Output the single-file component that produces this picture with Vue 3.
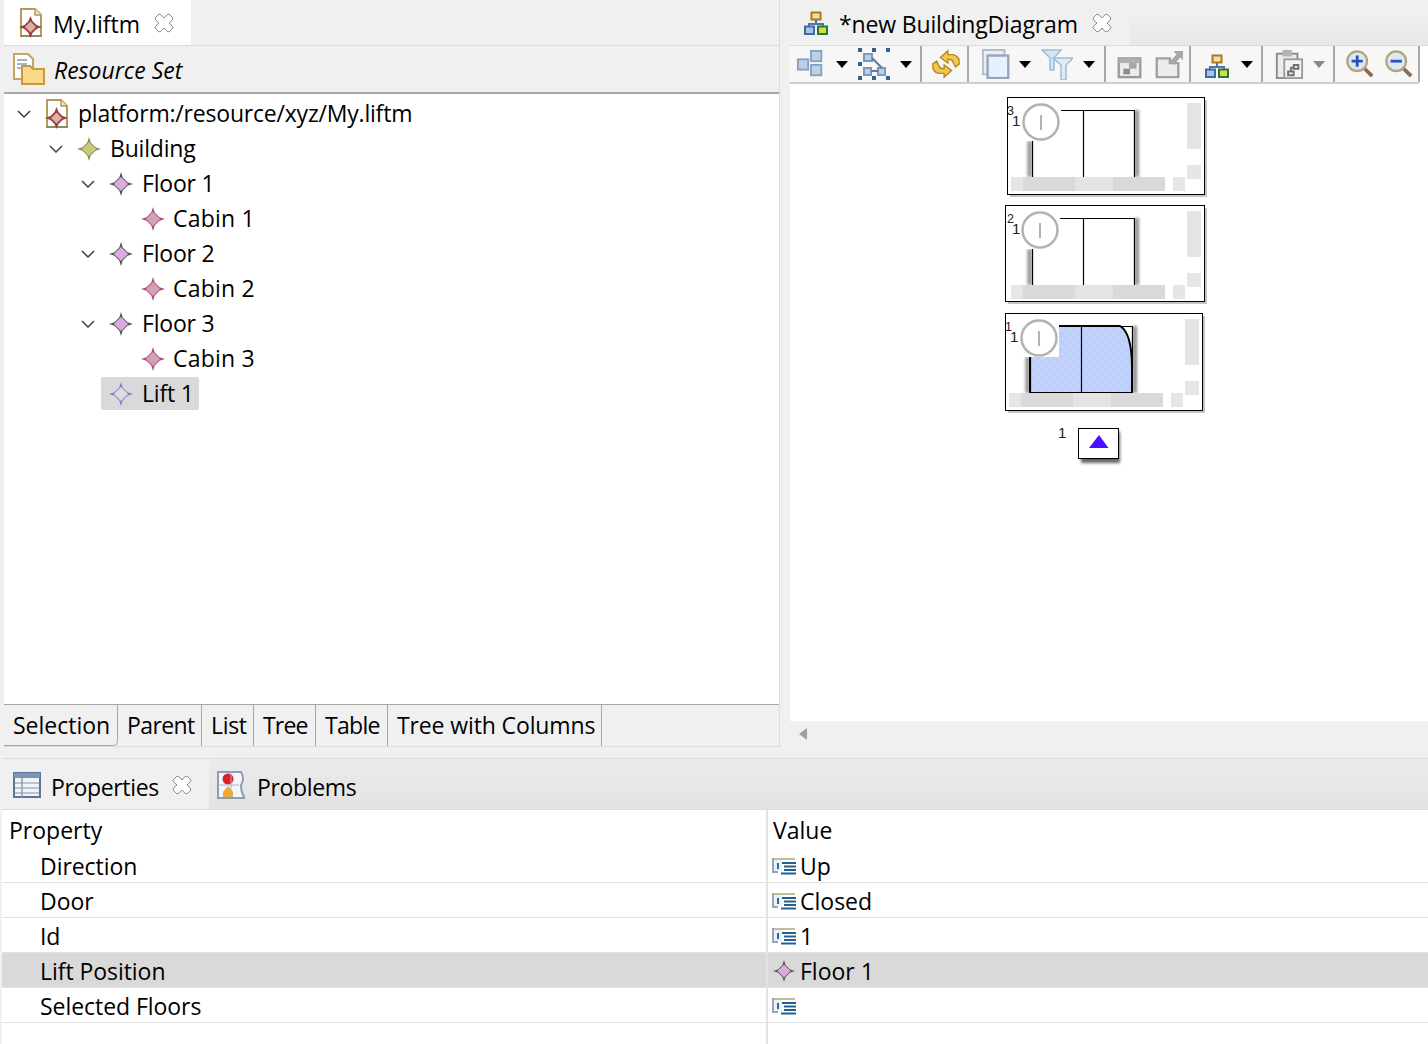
<template>
	<div class="page">
		<!-- shared icon shapes -->
		<svg class="defs" width="0" height="0" aria-hidden="true">
			<symbol id="star" viewBox="-11 -11 22 22">
				<path class="star-outer" d="M0-11 1.600-6 6-1.600 11 0 6 1.600 1.600 6 0 11-1.600 6-6 1.600-11 0-6-1.600-1.600-6Z" />
				<path class="star-inner" d="M0-6.500 6.500 0 0 6.500-6.500 0Z" />
			</symbol>
			<symbol id="model" viewBox="0 0 24 30">
				<path d="M2 1H16L22 7V28H2Z" fill="#fff" stroke="#b59a5a" stroke-width="2" />
				<path d="M16 1V7H22" fill="#f3e3b5" stroke="#b59a5a" stroke-width="1.500" />
				<path d="M1 28H23" stroke="#8b8b62" stroke-width="2" />
				<path d="M11.500 8 13.500 13 17.500 17 23 19 17.500 21 13.500 25 11.500 30 9.500 25 5.500 21 0 19 5.500 17 9.500 13Z" fill="#a23a3a" />
				<path d="M11.500 13 17.500 19 11.500 25 5.500 19Z" fill="#d9b2a8" stroke="#a23a3a" stroke-width="1" />
			</symbol>
			<symbol id="enum" viewBox="0 0 26 18">
				<path d="M1 1H21V3H3V14H7V16H1Z" fill="#a0a0b4" />
				<path d="M3 1H24V3H3Z" fill="#c4bc94" />
				<path d="M3 3H11V14H3Z" fill="#e8f2fa" />
				<path d="M6 6H8V12H6Z" fill="#1f6ea8" />
				<path d="M11 5H25V7H11ZM13 8.500H25V10.500H13ZM13 12H25V14H13ZM10 15.500H25V17.500H10Z" fill="#24608f" />
			</symbol>
			<symbol id="close" viewBox="0 0 22 22">
				<path d="M2 6 6 2Q8 2 11 6 14 2 16 2L20 6Q20 8 16 11 20 14 20 16L16 20Q14 20 11 16 8 20 6 20L2 16Q2 14 6 11 2 8 2 6Z" fill="#fff" stroke="#8c8c8c" stroke-width="1" />
			</symbol>
			<symbol id="hier" viewBox="0 0 24 24">
				<rect x="7.500" y="1.500" width="9" height="7" fill="#f5dfa0" stroke="#a9781c" stroke-width="2" />
				<path d="M12 9V13M5 17V13H19V17" fill="none" stroke="#4a74aa" stroke-width="2" />
				<rect x="1" y="15.500" width="9" height="7.500" fill="#a9c3e4" stroke="#3f6ba5" stroke-width="2" />
				<rect x="14" y="15.500" width="9" height="7.500" fill="#e3d840" stroke="#1f7a3d" stroke-width="2" />
			</symbol>
		</svg>

		<div class="top">
			<section class="editor">
				<header class="tabbar">
					<div class="tab tab-on editor-tab">
						<svg class="ic-model"><use href="#model" /></svg>
						<span class="tab-text">My.liftm</span>
						<svg class="ic-close"><use href="#close" /></svg>
					</div>
				</header>
				<div class="resource-head">
					<svg class="ic-set" viewBox="0 0 32 32">
						<path d="M1 1H15L20 6V26H1Z" fill="#fff" stroke="#c6a65e" stroke-width="2" />
						<path d="M4 7H14M4 11H14M4 15H10" stroke="#9fb4d0" stroke-width="2" />
						<path d="M9 13H17L20 16H31V31H9Z" fill="#fbd98b" stroke="#c99a3c" stroke-width="2" />
					</svg>
					<em>Resource Set</em>
				</div>
				<div class="tree">
					<div v-for="node in tree" :key="node.label" class="tree-row" :style="{ paddingLeft: node.indent + 'px' }">
						<svg v-if="node.open" class="chevron" viewBox="0 0 14 8"><path d="M1 1 7 7 13 1" fill="none" stroke="#404040" stroke-width="1.500" /></svg>
						<span v-else class="chevron"></span>
						<div class="tree-item" :class="{ 'tree-selected': node.selected }">
							<svg v-if="node.kind === 'model'" class="ic-model"><use href="#model" /></svg>
							<svg v-else class="ic-star" :class="node.kind"><use href="#star" /></svg>
							<span class="tree-label" :class="node.kind + '-label'">{{ node.label }}</span>
						</div>
					</div>
				</div>
				<div class="pages">
					<span
						v-for="(p, i) in pages"
						:key="p.label"
						class="page-tab"
						:class="{ 'page-on': i === 0 }"
						:style="{ width: p.width + 'px', letterSpacing: p.spacing + 'px' }"
					>{{ p.label }}</span>
				</div>
			</section>

			<section class="diagram">
				<header class="tabbar">
					<div class="tab diagram-tab">
						<svg class="ic-hier"><use href="#hier" /></svg>
						<span class="tab-text diagram-text">*new BuildingDiagram</span>
						<svg class="ic-close"><use href="#close" /></svg>
					</div>
				</header>
				<div class="toolbar">
					<div class="tool-group g1">
						<svg class="tool" viewBox="0 0 32 32">
							<g fill="#bcd0e8" stroke="#8aa0c0" stroke-width="2"><rect x="2" y="11" width="11" height="11" /><rect x="16" y="2" width="11" height="11" /><rect x="16" y="17" width="11" height="11" /></g>
						</svg>
						<i class="caret"></i>
						<svg class="tool tool-wide" viewBox="0 0 32 32">
							<g fill="#bcd0e8" stroke="#7b98bf" stroke-width="2"><rect x="6" y="6" width="8" height="7" /><rect x="6" y="20" width="7" height="7" /><rect x="20" y="20" width="7" height="7" /></g>
							<path d="M14 10 24 20M13 23H20" stroke="#5b7ba6" stroke-width="2" />
							<g fill="#35608f"><rect x="0" y="0" width="4" height="4" /><rect x="14" y="0" width="4" height="4" /><rect x="28" y="0" width="4" height="4" /><rect x="0" y="28" width="4" height="4" /><rect x="14" y="28" width="4" height="4" /><rect x="28" y="28" width="4" height="4" /><rect x="0" y="14" width="4" height="4" /></g>
						</svg>
						<i class="caret"></i>
					</div>
					<div class="tool-group g2">
						<svg class="tool" viewBox="0 0 32 32">
							<g fill="#f4c84a" stroke="#b58a20" stroke-width="1.500">
								<path d="M10 9 18 2V6H24Q31 8 30 16L26 19 23 13Q22 11 18 11V15Z" />
								<path d="M22 23 14 30V26H8Q1 24 2 16L6 13 9 19Q10 21 14 21V17Z" />
							</g>
						</svg>
					</div>
					<div class="tool-group g3">
						<svg class="tool" viewBox="0 0 32 32">
							<path d="M1 1H24V7H7V27H1Z" fill="#e8eef5" stroke="#b4bcc8" stroke-width="2" />
							<rect x="6" y="7" width="22" height="24" fill="#e4f2fd" stroke="#98a4b8" stroke-width="2.500" />
						</svg>
						<i class="caret caret-tight"></i>
						<svg class="tool tool-wide" viewBox="0 0 32 32">
							<path d="M1 2H20L13 10V22H9V10Z" fill="#cfe6f5" stroke="#a4bccf" stroke-width="1.500" />
							<path d="M12 10H32L25 17V32H20V17Z" fill="#dcedf8" stroke="#a4bccf" stroke-width="1.500" />
						</svg>
						<i class="caret"></i>
					</div>
					<div class="tool-group g4">
						<svg class="tool" viewBox="0 0 32 32">
							<rect x="4" y="10" width="23" height="20" fill="#ececec" stroke="#9a9a9a" stroke-width="2.500" />
							<rect x="4" y="10" width="23" height="5" fill="#b0b0b0" />
							<rect x="9" y="21" width="7" height="6" fill="#8c8c8c" />
							<rect x="15" y="15" width="8" height="6" fill="#a6a6a6" />
						</svg>
						<svg class="tool" viewBox="0 0 32 32">
							<path d="M4 10H18V15H27V30H4Z" fill="#ececec" stroke="#a0a0a0" stroke-width="2.500" />
							<path d="M18 13 25 6 22 2H32V12L29 9 22 17Z" fill="#a8a8a8" />
						</svg>
					</div>
					<div class="tool-group g5">
						<svg class="tool-hier"><use href="#hier" /></svg>
						<i class="caret caret-hier"></i>
					</div>
					<div class="tool-group g6">
						<svg class="tool" viewBox="0 0 32 32">
							<rect x="3" y="5" width="22" height="26" fill="#ececec" stroke="#8a8a8a" stroke-width="2" />
							<rect x="9" y="1" width="10" height="7" fill="#b4b4b4" />
							<rect x="11" y="11" width="19" height="20" fill="#f4f4f4" stroke="#9a9a9a" stroke-width="2" />
							<path d="M15 24H21V28H15ZM21 17H26V21H21ZM18 24V20H21" fill="none" stroke="#707070" stroke-width="2" />
						</svg>
						<i class="caret caret-off"></i>
					</div>
					<div class="tool-group g7">
						<svg class="tool" viewBox="0 0 32 32">
							<path d="M20 20 29 29" stroke="#8f6a50" stroke-width="4" />
							<circle cx="13" cy="13" r="10.500" fill="#dce8f5" stroke="#b2a67a" stroke-width="2.500" />
							<path d="M7 13H19M13 7V19" stroke="#2b52b8" stroke-width="3" />
						</svg>
						<svg class="tool" viewBox="0 0 32 32">
							<path d="M20 20 29 29" stroke="#8f6a50" stroke-width="4" />
							<circle cx="13" cy="13" r="10.500" fill="#dce8f5" stroke="#b2a67a" stroke-width="2.500" />
							<path d="M7 13H19" stroke="#2b52b8" stroke-width="3" />
						</svg>
					</div>
				</div>
				<div class="canvas">
					<svg class="canvas-svg" viewBox="790 84 638 637">
						<defs>
							<pattern id="dots" x="0" y="0" width="8" height="8" patternUnits="userSpaceOnUse">
								<rect width="8" height="8" fill="#bccfff" />
								<rect x="1" y="1" width="1" height="1" fill="#f0f4ff" />
								<rect x="5" y="5" width="1" height="1" fill="#f0f4ff" />
							</pattern>
							<filter id="soft" x="-60%" y="-30%" width="220%" height="160%"><feGaussianBlur stdDeviation="1.600" /></filter>
						</defs>
						<g v-for="f in floors" :key="f.n" :transform="`translate(${f.x} ${f.y})`">
							<rect x="3" y="3" :width="f.w" :height="f.h" fill="#c4c4c4" />
							<rect x="0.500" y="0.500" :width="f.w" :height="f.h" fill="#fff" stroke="#000" />
							<!-- cabin -->
							<g :transform="`translate(${f.ox} 0)`">
								<path d="M22.500 44V80M130 13V80" stroke="#8c8c8c" stroke-width="4" fill="none" filter="url(#soft)" />
								<path v-if="f.lift" d="M25 80V40Q25 13 40 13H115Q127 20 127 55V80Z" fill="url(#dots)" stroke="#000" stroke-width="2" />
								<path d="M40.500 13.500H127.500V80M76.500 13.500V80M25.500 43V80" fill="none" stroke="#000" stroke-width="1.200" />
							</g>
							<rect v-if="f.lift" x="1" y="1" width="53" height="43" fill="#fff" />
							<rect v-else x="1" y="5" :width="f.cx + 19" height="39" fill="#fff" />
							<circle :cx="f.cx" cy="25" r="17.500" fill="#fff" stroke="#b2b2b2" stroke-width="2.500" />
							<path :d="`M${f.cx} 18V33`" stroke="#b4b4b4" stroke-width="2" />
							<g :transform="`translate(${f.ox} 0)`">
								<rect x="4" y="80" width="12" height="14" fill="#e6e6e6" />
								<rect x="16" y="80" width="52" height="14" fill="#d9d9d9" />
								<rect x="68" y="80" width="38" height="14" fill="#e4e4e4" />
								<rect x="106" y="80" width="52" height="14" fill="#d9d9d9" />
								<rect x="166" y="80" width="12" height="14" fill="#e6e6e6" />
								<rect x="180" y="6" width="14" height="46" fill="#e4e4e4" />
								<rect x="180" y="68" width="14" height="14" fill="#e6e6e6" />
							</g>
							<text :x="f.tx" y="18" class="tiny">{{ f.n }}</text>
							<text :x="f.ox + 5" y="29" class="tiny-1">1</text>
						</g>
						<text x="1058" y="438" class="tiny-1">1</text>
						<rect x="1081" y="432" width="39" height="31" fill="#666" filter="url(#soft)" />
						<rect x="1078.500" y="428.500" width="40" height="30" fill="#fff" stroke="#000" />
						<path d="M1099 435 1108.500 448H1089Z" fill="#4a10ff" />
					</svg>
				</div>
				<div class="hscroll"><i class="arrow-left"></i></div>
			</section>
		</div>

		<section class="bottom">
			<header class="tabbar bottom-bar">
				<div class="tab tab-grey props-tab">
					<svg class="ic-table" viewBox="0 0 28 26">
						<rect x="1" y="1" width="26" height="24" fill="#f2f4f8" stroke="#5e7494" stroke-width="2" />
						<rect x="1" y="1" width="26" height="5" fill="#7d93b2" />
						<path d="M2 11H26M2 16H26M2 21H26" stroke="#b9c2d2" stroke-width="2" />
						<path d="M9 6V25" stroke="#8b9cb8" stroke-width="1.500" />
					</svg>
					<span class="bottom-text">Properties</span>
					<svg class="ic-close"><use href="#close" /></svg>
				</div>
				<div class="tab problems-tab">
					<svg class="ic-table" viewBox="0 0 28 28">
						<path d="M1 1H24Q28 8 24 14 24 22 28 27H1Z" fill="#f4f6fa" stroke="#8e9cb4" stroke-width="2" />
						<circle cx="11" cy="8" r="5.500" fill="#d9202a" />
						<path d="M11 15 16 21V26H6V21Z" fill="#f2a92c" />
						<path d="M1 14H22M14 1V27" stroke="#a9b4c6" stroke-width="1" />
					</svg>
					<span class="bottom-text">Problems</span>
				</div>
			</header>
			<div class="prop-table">
				<div class="prop-head"><span class="col-a head-a">Property</span><span class="col-b head-b">Value</span></div>
				<div v-for="row in props" :key="row.name" class="prop-row" :class="{ 'prop-selected': row.selected }">
					<span class="col-a name">{{ row.name }}</span>
					<span class="col-b value">
						<svg v-if="row.star" class="ic-star-small floor"><use href="#star" /></svg>
						<svg v-else class="ic-enum"><use href="#enum" /></svg>
						<span :class="{ 'value-star': row.star }">{{ row.value }}</span>
					</span>
				</div>
				<div class="prop-rest"><span class="col-a"></span><span class="col-b"></span></div>
			</div>
		</section>
	</div>
</template>

<script setup>
const tree = [
	{ label: "platform:/resource/xyz/My.liftm", indent: 13, open: true, kind: "model" },
	{ label: "Building", indent: 45, open: true, kind: "building" },
	{ label: "Floor 1", indent: 77, open: true, kind: "floor" },
	{ label: "Cabin 1", indent: 109, kind: "cabin" },
	{ label: "Floor 2", indent: 77, open: true, kind: "floor" },
	{ label: "Cabin 2", indent: 109, kind: "cabin" },
	{ label: "Floor 3", indent: 77, open: true, kind: "floor" },
	{ label: "Cabin 3", indent: 109, kind: "cabin" },
	{ label: "Lift 1", indent: 77, kind: "lift", selected: true },
];

const pages = [
	{ label: "Selection", width: 114, spacing: 0 },
	{ label: "Parent", width: 84, spacing: -0.6 },
	{ label: "List", width: 52, spacing: -0.3 },
	{ label: "Tree", width: 62, spacing: -0.8 },
	{ label: "Table", width: 72, spacing: -0.7 },
	{ label: "Tree with Columns", width: 214, spacing: -0.12 },
];

const floors = [
	{ n: 3, x: 1007, y: 97, w: 197, h: 97, ox: 0, cx: 34, tx: 0 },
	{ n: 2, x: 1005, y: 205, w: 199, h: 96, ox: 2, cx: 35, tx: 2 },
	{ n: 1, x: 1005, y: 313, w: 197, h: 97, ox: 0, cx: 34, tx: 0, lift: true },
];

const props = [
	{ name: "Direction", value: "Up" },
	{ name: "Door", value: "Closed" },
	{ name: "Id", value: "1" },
	{ name: "Lift Position", value: "Floor 1", star: true, selected: true },
	{ name: "Selected Floors", value: "" },
];
</script>

<style>
html,
body {
	margin: 0;
	overflow: hidden;
	background: #f0f0f0;
}
</style>

<style scoped>
.page {
	width: 1428px;
	height: 1044px;
	display: flex;
	flex-direction: column;
	overflow: hidden;
	background: #f0f0f0;
	color: #000;
	font-family: "Open Sans", "Noto Sans", sans-serif;
	font-size: 23px;
}

.defs {
	position: absolute;
}

.top {
	height: 758px;
	display: flex;
	flex: none;
}

.editor {
	width: 776px;
	height: 747px;
	margin-left: 4px;
	display: flex;
	flex-direction: column;
	background: #fff;
	border-right: 1px solid #dcdcdc;
}

.diagram {
	margin-left: 10px;
	flex: 1;
	height: 747px;
	display: flex;
	flex-direction: column;
	background: #fff;
}

.tabbar {
	height: 46px;
	flex: none;
	display: flex;
	background: linear-gradient(#f2f2f2, #e8e8e8);
	border-bottom: 1px solid #dcdcdc;
	box-sizing: border-box;
}

.editor .tabbar {
	background: #f0f0f0;
}

.tab {
	height: 45px;
	display: flex;
	align-items: center;
	box-sizing: border-box;
}

.tab-on {
	background: #fff;
}

.tab-text {
	padding-top: 2px;
}

.editor-tab {
	width: 187px;
	padding-left: 15px;
	gap: 10px;
}

.editor-tab .ic-close {
	margin-left: 3px;
}

.diagram-tab {
	width: 340px;
	padding-left: 14px;
	gap: 11px;
	background: #f0f0f0;
}

.diagram-text {
	letter-spacing: -0.15px;
}

.ic-model {
	width: 24px;
	height: 30px;
	flex: none;
}

.ic-close {
	width: 22px;
	height: 22px;
	flex: none;
	margin-left: 2px;
}

.ic-hier {
	width: 24px;
	height: 24px;
	flex: none;
}

.resource-head {
	height: 48px;
	flex: none;
	box-sizing: border-box;
	display: flex;
	align-items: center;
	gap: 9px;
	padding-left: 9px;
	background: #f0f0f0;
	border-bottom: 2px solid #a6a6a6;
}

.resource-head em {
	padding-top: 2px;
}

.ic-set {
	width: 32px;
	height: 32px;
}

.tree {
	flex: 1;
	padding-top: 2px;
}

.tree-row {
	height: 35px;
	display: flex;
	align-items: center;
}

.chevron {
	width: 14px;
	height: 8px;
	flex: none;
}

.tree-item {
	height: 33px;
	margin-left: 6px;
	padding: 0 5px 0 8px;
	display: flex;
	align-items: center;
	border-radius: 2px;
}

.tree-selected {
	background: #d9d9d9;
}

.ic-star {
	width: 24px;
	height: 24px;
	flex: none;
}

.tree-label {
	margin-left: 9px;
	padding-bottom: 2px;
	letter-spacing: -0.2px;
	white-space: nowrap;
}

.cabin-label {
	margin-left: 8px;
	letter-spacing: 0.2px;
}

.star-outer {
	fill: var(--star-dark);
}

.star-inner {
	fill: var(--star-light);
}

.building {
	--star-dark: #8b8b52;
	--star-light: #c9c97a;
}

.floor {
	--star-dark: #555;
	--star-light: #dcaadc;
}

.cabin {
	--star-dark: #b84582;
	--star-light: #cfa3b3;
}

.lift {
	--star-dark: #7f7fd2;
	--star-light: #dcdcdc;
}

.pages {
	height: 43px;
	flex: none;
	display: flex;
	background: #f0f0f0;
	border-top: 1px solid #a6a6a6;
	box-sizing: border-box;
	border-bottom: 1px solid #dcdcdc;
}

.page-tab {
	height: 41px;
	padding-left: 9px;
	line-height: 41px;
	box-sizing: border-box;
	border-right: 1px solid #a6a6a6;
	background: #f0f0f0;
	white-space: nowrap;
	flex: none;
}

.page-on {
	border-bottom: 1px solid #a6a6a6;
	border-bottom-right-radius: 5px;
}

.toolbar {
	height: 38px;
	flex: none;
	display: flex;
	align-items: center;
	box-sizing: border-box;
	width: 629px;
	background: #f7f7f7;
	border-bottom: 2px solid #cfcfcf;
	border-right: 1px solid #cfcfcf;
}

.tool-group {
	height: 36px;
	flex: none;
	display: flex;
	align-items: center;
	box-sizing: border-box;
	border-right: 2px solid #a8a8a8;
}

.g1 { width: 132px; padding-left: 6px; }
.g2 { width: 47px; padding-left: 9px; }
.g3 { width: 137px; padding-left: 13px; }
.g4 { width: 85px; padding-left: 9px; }
.g5 { width: 72px; padding-left: 14px; }
.g6 { width: 72px; padding-left: 11px; }
.g7 { width: 85px; padding-left: 10px; gap: 9px; }

.tool {
	width: 30px;
	height: 30px;
	flex: none;
}

.tool-wide {
	width: 32px;
	height: 32px;
}

.tool-hier {
	width: 24px;
	height: 24px;
	flex: none;
	margin-top: 4px;
}

.caret {
	width: 0;
	height: 0;
	margin: 0 10px;
	border-left: 6px solid transparent;
	border-right: 6px solid transparent;
	border-top: 7px solid #000;
	flex: none;
}

.caret-tight {
	margin-left: 7px;
}

.caret-hier {
	margin-left: 12px;
}

.caret-off {
	margin-left: 9px;
	border-top-color: #888;
}

.g4 .tool + .tool {
	margin-left: 8px;
}

.canvas {
	flex: 1;
	min-height: 0;
	background: #fff;
}

.canvas-svg {
	display: block;
	width: 638px;
	height: 637px;
}

.tiny,
.tiny-1 {
	font-family: "Liberation Sans", sans-serif;
	fill: #222;
}

.tiny {
	font-size: 12.500px;
}

.tiny-1 {
	font-size: 15px;
}

.hscroll {
	height: 26px;
	flex: none;
	display: flex;
	align-items: center;
	background: #f0f0f0;
	padding-left: 9px;
}

.arrow-left {
	width: 0;
	height: 0;
	border-top: 6px solid transparent;
	border-bottom: 6px solid transparent;
	border-right: 8px solid #a0a0a0;
}

.bottom {
	flex: 1;
	min-height: 0;
	margin-left: 2px;
	display: flex;
	flex-direction: column;
	background: #fff;
}

.bottom-bar {
	height: 52px;
	background: linear-gradient(#ebebeb, #e3e3e3);
	border-top: 1px solid #dcdcdc;
}

.tab-grey {
	background: #f0f0f0;
}

.bottom-bar .tab {
	height: 50px;
	padding-top: 2px;
}

.bottom-text {
	padding-top: 4px;
	letter-spacing: -0.35px;
}

.props-tab {
	width: 207px;
	padding-left: 11px;
	gap: 10px;
}

.problems-tab {
	padding-left: 8px;
	gap: 12px;
}

.ic-table {
	width: 28px;
	height: 28px;
	flex: none;
}

.prop-table {
	flex: 1;
	display: flex;
	flex-direction: column;
}

.prop-head,
.prop-row,
.prop-rest {
	display: flex;
	flex: none;
}

.prop-head {
	height: 38px;
	line-height: 40px;
}

.prop-row {
	height: 35px;
	line-height: 37px;
	box-sizing: border-box;
	border-bottom: 1px solid #e2e2e2;
}

.prop-rest {
	flex: 1;
}

.prop-selected {
	background: #d9d9d9;
}

.col-a {
	width: 764px;
	flex: none;
	box-sizing: border-box;
}

.col-b {
	flex: 1;
	box-sizing: border-box;
	border-left: 2px solid #e2e2e2;
}

.head-a {
	padding-left: 7px;
}

.head-b {
	padding-left: 5px;
}

.name {
	padding-left: 38px;
	letter-spacing: -0.05px;
}

.value {
	display: flex;
	align-items: center;
	padding-left: 3px;
	padding-top: 2px;
	gap: 3px;
}

.ic-enum {
	width: 26px;
	height: 18px;
	flex: none;
}

.ic-star-small {
	width: 22px;
	height: 22px;
	flex: none;
	margin-left: 2px;
}

.value-star {
	margin-left: 2px;
}
</style>
